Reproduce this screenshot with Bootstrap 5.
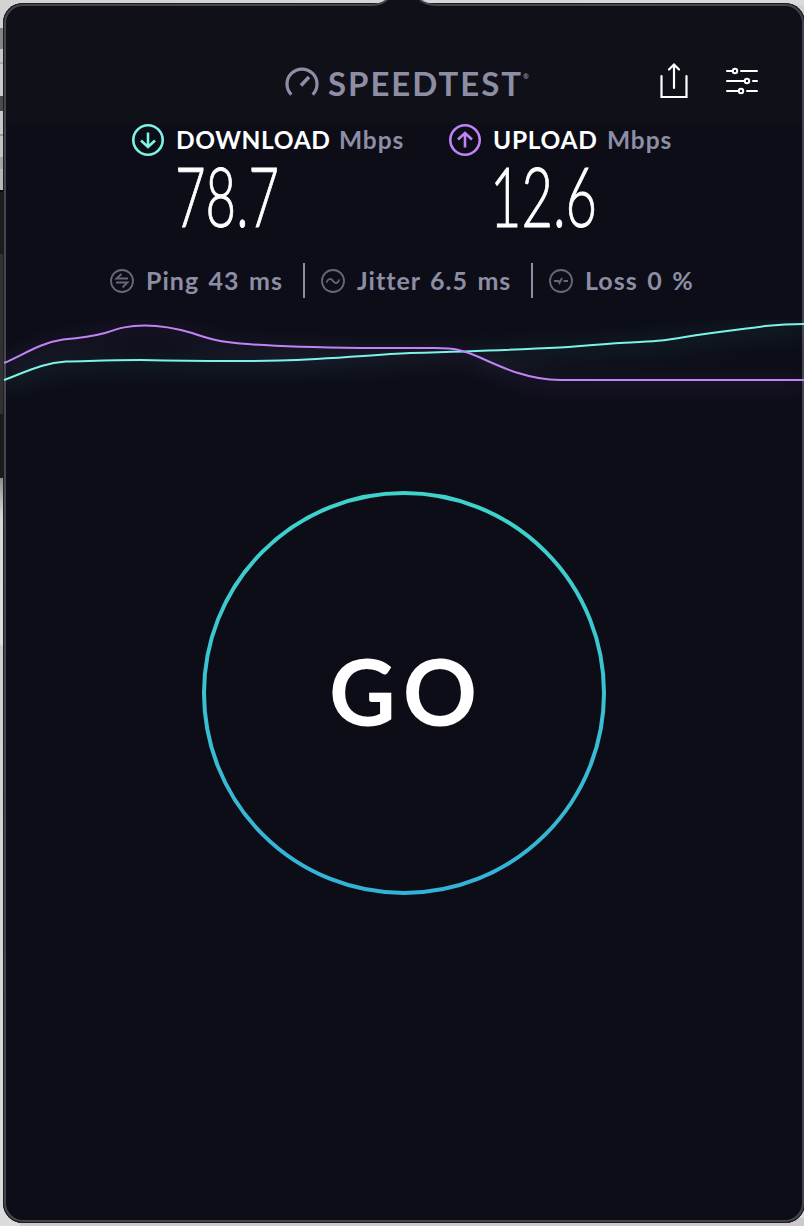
<!DOCTYPE html>
<html lang="en">
<head>
  <meta charset="UTF-8" />
  <meta name="viewport" content="width=device-width, initial-scale=1.0" />
  <title>Speedtest</title>
  <link
    href="https://cdn.jsdelivr.net/npm/bootstrap@5.3.0/dist/css/bootstrap.min.css"
    rel="stylesheet"
  />
  <style>
    body {
      height: 1226px;
      padding: 3px 0 0 3px;
      font-family: Lato, "Liberation Sans", sans-serif;
      /* desktop showing behind the popover */
      background:
        linear-gradient(90deg, #d4d2d3, #dadada) 4px 0 / 800px 5px no-repeat,
        linear-gradient(#cfc9cc, #cfc9cc) 20px 1218px / 784px 8px no-repeat,
        linear-gradient(#d2d2d2 0 28px, #858585 28px 49px, #c9c9c9 49px 62px, #aaa 62px 64px,
          #cdcdcd 64px 96px, #4b4b4b 96px 111px, #c8c8c8 111px 134px, #999 134px 136px,
          #c4c4c4 136px 157px, #a5a5a5 157px 169px, #b8b8b8 169px 190px, #0b0b0b 190px 192px,
          #1c1c1c 192px 254px, #313131 254px 414px, #1a1a1a 414px 478px,
          #8e8e8e 478px, #d6d6d6 515px, #e0e1df 644px, #cfd0ce 646px, #dcdcdc 1226px);
    }
    .panel {
      width: 802px;
      height: 1220px;
      border-radius: 20px;
      background: linear-gradient(#0f1018 0 120px, #0c0d17 122px);
      box-shadow: inset 0 0 0 1px #1b1b22, inset 0 0 0 3px #45464d;
    }
    .notch { top: -3px; left: 368px; }
    .top-bar { height: 120px; padding-top: 58px; }
    .top-side { width: 282px; }
    .brand { width: 374px; color: #8d8da5; font-size: 33px; line-height: 44px; font-weight: 700; letter-spacing: 1.950px; }
    .brand span { margin-left: 9px; }
    .brand sup { font-size: 7px; top: -17px; left: 0; letter-spacing: 0; }
    .tools { padding-top: 1px; }
    .tools svg + svg { margin-left: 36px; }
    .muted { color: #8d8da5; }
    .results { padding-left: 129px; height: 124px; }
    .result { width: 317px; }
    .result-head { height: 34px; font-size: 24.5px; font-weight: 700; }
    .result-head svg { margin-right: 12px; }
    .dl-label { width: 163px; letter-spacing: .6px; }
    .ul-label { width: 114px; letter-spacing: .7px; }
    .unit { letter-spacing: .9px; }
    .figures { display: block; margin-left: 40px; overflow: visible; font-weight: 300; font-size: 82px; fill: #fff; stroke: #fff; stroke-width: 1px; }
    .stats { padding-left: 107px; height: 73px; font-size: 25px; font-weight: 700; letter-spacing: 1px; word-spacing: 2.400px; }
    .stat { height: 35px; }
    .stat svg { margin-right: 12px; }
    .stat + .stat { border-left: 2px solid #8d8da5; padding-left: 16px; }
    .ping { width: 193px; }
    .jitter { width: 228px; }
    .chart { display: block; }
    .go { width: 404px; height: 404px; margin-top: 81px; margin-left: 199px; }
    .go text { font-size: 92px; font-weight: 700; fill: #fff; }
  </style>
</head>
<body class="overflow-hidden">

  <main class="panel position-relative">
    <svg class="notch position-absolute" width="66" height="8" viewBox="0 0 66 8">
      <path d="M0 7.500V4C8 4 12 2.500 15 0H49C52 2.500 56 4 66 4V7.500Z" fill="#0f1018" />
      <path d="M0 5C8 5 12 3 16 0M66 5C57 5 53 3 49 0" fill="none" stroke="#45464d" stroke-width="2" />
    </svg>

    <!-- Logo and toolbar -->
    <header class="top-bar d-flex align-items-start">
      <div class="top-side flex-shrink-0"></div>
      <div class="brand d-flex align-items-center flex-shrink-0">
        <svg width="34" height="34" viewBox="0 0 34 34" fill="none" stroke="#8d8da5">
          <path d="M6.300 28.600A15 15 0 1 1 27.700 28.600" stroke-width="3.200" />
          <path d="M16 19.500L24 11" stroke-width="3.600" />
        </svg>
        <span>SPEEDTEST<sup>®</sup></span>
      </div>
      <div class="tools d-flex align-items-center">
        <svg width="30" height="38" viewBox="0 0 30 38" fill="none" stroke="#fff" stroke-width="2.200" stroke-linecap="round">
          <path d="M2.500 14V35H27.500V14M15 26V3M10 7.500L15 2.500L20 7.500" />
        </svg>
        <svg width="34" height="30" viewBox="0 0 34 30" fill="none" stroke="#fff" stroke-width="2" stroke-linecap="round">
          <path d="M2 5H7M16 5H32M2 15H19M28 15H32M2 25H13M22 25H32" />
          <circle cx="10" cy="5" r="2.200" /><circle cx="22" cy="15" r="2.200" /><circle cx="16" cy="25" r="2.200" />
        </svg>
      </div>
    </header>

    <!-- Download / upload -->
    <section class="results d-flex">
      <div class="result">
        <div class="result-head d-flex align-items-center">
          <svg width="32" height="32" viewBox="0 0 32 32" fill="none" stroke="#7df4e8" stroke-width="2.600">
            <circle cx="16" cy="16" r="14.700" /><path d="M16 8.500V23M9 16.500L16 23L23 16.500" />
          </svg>
          <span class="dl-label text-white">DOWNLOAD</span><span class="unit muted">Mbps</span>
        </div>
        <svg class="figures" width="120" height="80"><text x="3" y="70" textLength="104" lengthAdjust="spacingAndGlyphs">78.7</text></svg>
      </div>
      <div class="result">
        <div class="result-head d-flex align-items-center">
          <svg width="32" height="32" viewBox="0 0 32 32" fill="none" stroke="#bf84f5" stroke-width="2.600">
            <circle cx="16" cy="16" r="14.700" /><path d="M16 23.500V9M9 15.500L16 9L23 15.500" />
          </svg>
          <span class="ul-label text-white">UPLOAD</span><span class="unit muted">Mbps</span>
        </div>
        <svg class="figures" width="120" height="80"><text x="1" y="70" textLength="107" lengthAdjust="spacingAndGlyphs">12.6</text></svg>
      </div>
    </section>

    <!-- Latency -->
    <section class="stats d-flex muted pt-3">
      <div class="stat ping d-flex align-items-center">
        <svg width="24" height="24" viewBox="0 0 24 24" fill="none" stroke="#67677b" stroke-width="1.800">
          <circle cx="12" cy="12" r="11" /><path d="M11.500 5L6.500 9.500H18M6 13.500H17.500L12.500 18.500" />
        </svg>
        <span>Ping 43 ms</span>
      </div>
      <div class="stat jitter d-flex align-items-center">
        <svg width="24" height="24" viewBox="0 0 24 24" fill="none" stroke="#67677b" stroke-width="1.800">
          <circle cx="12" cy="12" r="11" /><path d="M5.500 13.500C7.500 9 10 9 12 12S16.500 15 18.500 10.500" />
        </svg>
        <span>Jitter 6.5 ms</span>
      </div>
      <div class="stat d-flex align-items-center">
        <svg width="24" height="24" viewBox="0 0 24 24" fill="none" stroke="#67677b" stroke-width="1.800">
          <circle cx="12" cy="12" r="11" /><path d="M5 12H9.500L10.500 14L13 9M14.500 12H19" />
        </svg>
        <span>Loss 0 %</span>
      </div>
    </section>

    <svg class="chart" width="801" height="90" viewBox="3 320 801 90" fill="none" stroke-width="2">
      <defs>
        <filter id="glow" x="-5%" y="-60%" width="110%" height="260%"><feGaussianBlur stdDeviation="10" /></filter>
        <path id="down" d="M4 380C28 371 43 363 66 361.500C90 361 110 360 140 360C190 361 235 361.500 280 360.500C330 359 370 355 410 353C460 351.500 520 349.500 560 347.500C590 346 600 344 620 343C650 341.500 660 341.500 685 337C715 332 740 329.500 765 326C785 324 792 324 804 324" />
        <path id="up" d="M4 363C25 354 40 343 63 339.500C80 338 90 337 105 333C120 328 128 325.500 145 325.500C163 325.500 175 328 192 333C212 340 222 342 240 343.500C280 347 320 347.500 360 348H435C455 348 463 350 480 357.500C505 369 530 380 560 380H804" />
      </defs>
      <g filter="url(#glow)" stroke-width="14" opacity=".1">
        <use href="#down" y="4" stroke="#55c8c4" /><use href="#up" y="4" stroke="#a060c8" />
      </g>
      <use href="#down" stroke="#7df4e8" />
      <use href="#up" stroke="#bf84f5" />
    </svg>

    <svg class="go d-block" viewBox="0 0 404 404" role="button">
      <defs>
        <linearGradient id="ring" x1="0" y1="0" x2="0" y2="1">
          <stop offset="0" stop-color="#3fd3cb" /><stop offset="1" stop-color="#34b1d8" />
        </linearGradient>
      </defs>
      <circle cx="202" cy="202" r="200" fill="none" stroke="url(#ring)" stroke-width="4" />
      <text x="127" y="235" textLength="148">GO</text>
    </svg>
  </main>

  <script src="https://cdn.jsdelivr.net/npm/bootstrap@5.3.0/dist/js/bootstrap.bundle.min.js"></script>
</body>
</html>
